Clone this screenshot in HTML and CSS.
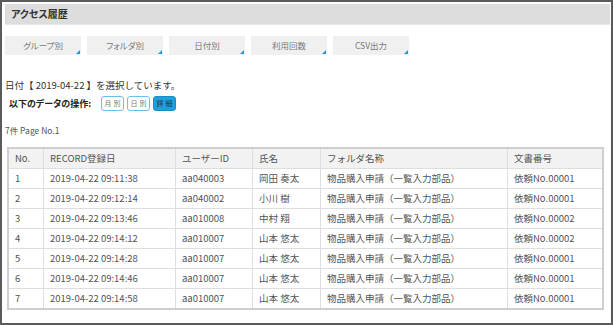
FILE: index.html
```
<!DOCTYPE html>
<html lang="ja">
<head>
    <meta charset="UTF-8">
    <title>アクセス履歴</title>
    <link rel="stylesheet" href="styles.css">
</head>
<body>
    <div class="frame">
        <header class="title-bar">アクセス履歴</header>

        <nav class="tabs">
            <div class="tab">グループ別</div>
            <div class="tab">フォルダ別</div>
            <div class="tab">日付別</div>
            <div class="tab">利用回数</div>
            <div class="tab">CSV出力</div>
        </nav>

        <p class="selected">日付【 2019-04-22 】を選択しています。</p>
        <div class="ops">
            <span class="ops-label">以下のデータの操作:</span>
            <button class="op">月別</button>
            <button class="op">日別</button>
            <button class="op active">詳細</button>
        </div>

        <p class="count">7件 Page No.1</p>

        <table class="records">
            <thead>
                <tr>
                    <th class="c-no">No.</th>
                    <th class="c-date">RECORD登録日</th>
                    <th class="c-user">ユーザーID</th>
                    <th class="c-name">氏名</th>
                    <th class="c-folder">フォルダ名称</th>
                    <th class="c-doc">文書番号</th>
                </tr>
            </thead>
            <tbody>
                <tr><td>1</td><td>2019-04-22 09:11:38</td><td>aa040003</td><td>岡田 奏太</td><td>物品購入申請（一覧入力部品）</td><td>依頼No.00001</td></tr>
                <tr><td>2</td><td>2019-04-22 09:12:14</td><td>aa040002</td><td>小川 樹</td><td>物品購入申請（一覧入力部品）</td><td>依頼No.00001</td></tr>
                <tr><td>3</td><td>2019-04-22 09:13:46</td><td>aa010008</td><td>中村 翔</td><td>物品購入申請（一覧入力部品）</td><td>依頼No.00002</td></tr>
                <tr><td>4</td><td>2019-04-22 09:14:12</td><td>aa010007</td><td>山本 悠太</td><td>物品購入申請（一覧入力部品）</td><td>依頼No.00002</td></tr>
                <tr><td>5</td><td>2019-04-22 09:14:28</td><td>aa010007</td><td>山本 悠太</td><td>物品購入申請（一覧入力部品）</td><td>依頼No.00001</td></tr>
                <tr><td>6</td><td>2019-04-22 09:14:46</td><td>aa010007</td><td>山本 悠太</td><td>物品購入申請（一覧入力部品）</td><td>依頼No.00001</td></tr>
                <tr><td>7</td><td>2019-04-22 09:14:58</td><td>aa010007</td><td>山本 悠太</td><td>物品購入申請（一覧入力部品）</td><td>依頼No.00001</td></tr>
            </tbody>
        </table>
    </div>
</body>
</html>
```

FILE: styles.css
```
body {
    margin: 0;
    font-family: "Noto Sans CJK JP", "Noto Sans", sans-serif;
    color: #444;
    background: #fff;
}

.frame {
    box-sizing: border-box;
    width: 613px;
    height: 325px;
    border: 2px solid #5a5a5a;
    padding: 2px 0 0 3px;
    overflow: hidden;
}

.title-bar {
    box-sizing: border-box;
    height: 21px;
    margin-right: 1px;
    padding-left: 6px;
    background: #dddddd;
    border-bottom: 1px solid #e8e8e8;
    font-size: 10px;
    font-weight: bold;
    font-feature-settings: "palt";
    line-height: 20px;
    color: #333;
}

.tabs {
    display: flex;
    gap: 6px;
    margin-top: 11px;
}

.tab {
    position: relative;
    width: 76px;
    height: 19px;
    background: #f0f0f0;
    color: #7a7a7a;
    font-size: 8.5px;
    font-feature-settings: "palt";
    line-height: 19px;
    text-align: center;
}

.tab::after {
    content: "";
    position: absolute;
    right: 1px;
    bottom: 1px;
    border-left: 4px solid transparent;
    border-bottom: 4px solid #1a9ad6;
}

.selected {
    margin: 23px 0 0;
    font-size: 9.5px;
    line-height: 14px;
    color: #333;
}

.ops {
    display: flex;
    align-items: center;
    gap: 3px;
    margin: 4px 0 0 4px;
}

.ops-label {
    font-size: 9px;
    font-weight: bold;
    font-feature-settings: "palt";
    color: #222;
    margin-right: 7px;
}

.op {
    box-sizing: border-box;
    width: 23px;
    height: 15px;
    padding: 0;
    border: 1px solid #6dc1e8;
    border-radius: 3px;
    background: #fff;
    color: #777;
    font-family: inherit;
    font-size: 7px;
    letter-spacing: 2px;
    text-indent: 2px;
    line-height: 13px;
}

.op.active {
    background: #1ea0dc;
    border-color: #1a8fc6;
    color: #1d3a4a;
}

.count {
    margin: 13px 0 0;
    font-size: 8.5px;
    line-height: 12px;
    color: #555;
}

.records {
    margin: 11px 0 0 2px;
    width: 597px;
    border-collapse: collapse;
    border: 2px solid #cfcfcf;
    font-size: 9.5px;
    color: #555;
}

.records th,
.records td {
    height: 19px;
    line-height: 19px;
    padding: 0 6px;
    border: 1px solid #dedede;
    text-align: left;
    font-weight: normal;
    white-space: nowrap;
}

.records th {
    background: #f2f2f2;
    color: #555;
}

.c-no { width: 22px; }
.c-date { width: 119px; }
.c-user { width: 64px; }
.c-name { width: 55px; }
.c-folder { width: 174px; }
```
